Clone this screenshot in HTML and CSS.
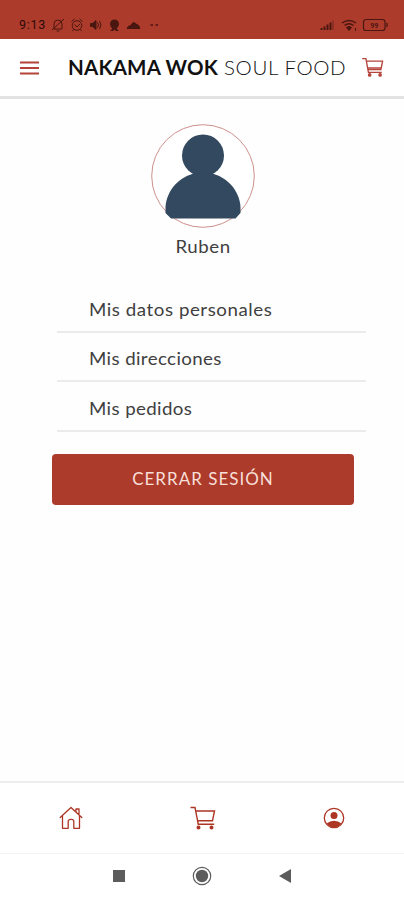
FILE: index.html
```html
<!DOCTYPE html>
<html lang="es">
<head>
<meta charset="utf-8">
<title>Nakama Wok Soul Food</title>
<link rel="stylesheet" href="styles.css">
</head>
<body>
<div class="status">
  <span class="time">9:13</span>
  <svg class="status-left" width="108" height="16" viewBox="0 0 108 16" fill="none" stroke="currentColor">
    <path d="M3 12V7a4 4 0 0 1 8 0v5H3M5.500 14h3M1 13L13 2"/>
    <circle cx="26" cy="8.500" r="4.800"/><path d="M23.500 7.500l2.500 2.500 3-3M20.500 4.500l3-2.500M31.500 4.500l-3-2.500M22.500 12.500l-1 1.500M29.500 12.500l1 1.500"/>
    <path d="M39.500 6.500h2l3.500-3v9l-3.500-3h-2z" fill="currentColor"/><path d="M46.500 5.500q2 2.500 0 5M48.500 4q3 4 0 8"/>
    <g fill="currentColor" stroke="none"><circle cx="63.500" cy="7" r="4.500"/><path d="M61 10h5v2l2 2h-3l-1.500-1.500L62 14h-3l2-2z"/></g>
    <path d="M76 11.500q1-3 4-3 2-5 5-1.500 3 .5 4 4.500z" fill="currentColor"/>
    <path d="M99.500 8h2.500M104.500 8h2.500" stroke-width="1.500"/>
  </svg>
  <svg class="status-right" width="68" height="16" viewBox="0 0 68 16" fill="none" stroke="currentColor">
    <path d="M1.500 11v2M4.500 9.500V13M7.500 7.500V13M10.500 5.500V13" stroke-width="2"/><path d="M13 3.500V13" opacity=".6"/>
    <path d="M22 6q7-5 14 0M24.500 8.500q4.500-3.500 9 0" stroke-width="1.500"/><path d="M26.500 10.500q2.500-2 5 0L29 13.500z" fill="currentColor"/><path d="M35.500 11v3"/>
    <rect x="43.500" y="2.500" width="21.500" height="11" rx="2.500" stroke-width="1.200"/><path d="M67 6v4" stroke-width="1.300"/>
    <text x="54.200" y="10.500" class="battery">99</text>
  </svg>
</div>
<header class="header">
  <svg class="menu" width="20" height="14" viewBox="0 0 20 14"><path d="M0 1.500h19M0 7h19M0 12.500h19" stroke="currentColor" stroke-width="1.800"/></svg>
  <h1 class="brand"><b>NAKAMA WOK</b><span>SOUL FOOD</span></h1>
  <svg class="header-cart" width="22" height="20" viewBox="0 0 26 24" fill="none" stroke="currentColor" stroke-width="1.600"><path d="M0 2h4.500l3 16.500h16M5.200 5h19.300l-2 10H7M7 13h15.500"/><circle cx="9" cy="21.500" r="1.400" fill="currentColor"/><circle cx="21.500" cy="21.500" r="1.400" fill="currentColor"/></svg>
</header>
<main class="main">
  <svg class="avatar" width="104" height="104" viewBox="0 0 104 104"><circle cx="52" cy="52" r="51.300" fill="#fff" stroke="#c78380" stroke-width=".9"/><g fill="#32495f"><circle cx="52" cy="31.500" r="21"/><path d="M14.500 89V83C15.500 66 29 52 44 49.500h16C75 52 88.500 66 89.500 83v6l-5 5.500H20z"/></g></svg>
  <p class="name"><span class="wide">Ruben</span></p>
  <nav class="list">
    <a class="row"><span class="wide">Mis datos personales</span></a>
    <a class="row"><span class="wide snug">Mis direcciones</span></a>
    <a class="row"><span class="wide snug">Mis pedidos</span></a>
  </nav>
  <button class="logout">CERRAR SESIÓN</button>
</main>
<nav class="tabs">
  <svg width="24" height="24" viewBox="0 0 24 24" fill="none" stroke="currentColor" stroke-width="1.300" stroke-linejoin="round" stroke-linecap="round"><path d="M1.200 11.500L12 1.500l10.800 10M17 6V3h3v6M3.500 10v12.300h5.700v-7q0-2 2.800-2t2.800 2v7h5.700V10"/></svg>
  <svg width="26" height="24" viewBox="0 0 26 24" fill="none" stroke="currentColor" stroke-width="1.400"><path d="M.5 1.500H5l2.600 13.300h14.900l2-9.800H5.800M7.500 14.500l.7 3.700h16"/><circle cx="8.500" cy="21.500" r="1.300" fill="currentColor"/><circle cx="21.500" cy="21.500" r="1.300" fill="currentColor"/></svg>
  <svg width="22" height="22" viewBox="0 0 22 22"><circle cx="11" cy="11" r="9.700" fill="none" stroke="currentColor" stroke-width="1.300"/><circle cx="11" cy="8.500" r="3.500" fill="currentColor"/><path d="M3.500 16.500q3.500-2.800 7.500-2.800t7.500 2.800Q15.500 20.500 11 20.500t-7.500-4z" fill="currentColor"/></svg>
</nav>
<div class="system">
  <svg width="12" height="12" viewBox="0 0 12 12"><path d="M0 0h12v12H0z" fill="currentColor"/></svg>
  <svg width="20" height="20" viewBox="0 0 20 20"><circle cx="10" cy="10" r="8.700" fill="none" stroke="currentColor" stroke-width="1.200"/><circle cx="10" cy="10" r="6.200" fill="currentColor"/></svg>
  <svg width="12" height="14" viewBox="0 0 12 14"><path d="M0 7L12 0v14z" fill="currentColor"/></svg>
</div>
</body>
</html>
```
FILE: styles.css
```css
* { box-sizing: border-box; }
body {
  margin: 0;
  width: 404px;
  height: 900px;
  display: flex;
  flex-direction: column;
  background: #fefefe;
  color: #404040;
  font-family: Lato, sans-serif;
  overflow: hidden;
}
svg { display: block; flex: none; }
.status {
  height: 39px;
  padding: 10px 16px 0 19px;
  display: flex;
  align-items: center;
  background: #ac3b2b;
  color: #4a1610;
}
.time { width: 32px; font: 400 12.5px Roboto, sans-serif; letter-spacing: .7px; color: #2c0b08; }
.status-right { margin-left: auto; }
.battery { font: 700 7px Roboto, sans-serif; fill: currentColor; stroke: none; text-anchor: middle; }
.header {
  height: 60px;
  padding: 0 20px 2px 20px;
  display: flex;
  align-items: center;
  background: #fff;
  border-bottom: 3px solid #e2e2e2;
  color: #b5433a;
}
.menu { margin-top: 2px; }
.brand {
  margin: 0 0 0 28px;
  display: flex;
  gap: 6px;
  color: #111;
  font-size: 20.5px;
  line-height: 24px;
  font-weight: 300;
  white-space: nowrap;
}
.brand b { width: 150px; font-weight: 700; letter-spacing: .2px; }
.brand span { width: 122px; letter-spacing: .6px; }
.header-cart { margin-left: auto; }
.main { flex: 1; display: flex; flex-direction: column; align-items: center; padding-top: 25px; }
.avatar { margin-left: 2px; }
.name { margin: 8px 0 0 2px; font-size: 17px; line-height: 22px; }
.wide { display: inline-block; transform: scaleX(1.1); transform-origin: left; letter-spacing: .5px; }
.name .wide { transform-origin: center; }
.snug { letter-spacing: .35px; }
.list { width: 309px; margin: 25px 0 0 19px; }
.row {
  display: flex;
  align-items: flex-end;
  height: 49.5px;
  padding: 0 0 10px 32px;
  border-bottom: 2px solid #ebebeb;
  font-size: 17px;
  line-height: 22px;
}
.logout {
  width: 302px;
  height: 51px;
  margin: 22px 0 0 2px;
  padding: 0 0 2px;
  border: 0;
  border-radius: 4px;
  background: #ac3b2b;
  color: #f8dfd8;
  font: 400 17px Lato, sans-serif;
  letter-spacing: 1px;
}
.tabs {
  height: 72px;
  padding: 0 59px;
  display: flex;
  align-items: center;
  justify-content: space-between;
  border-top: 2px solid #eee;
  background: #fff;
  color: #ad3524;
}
.system {
  height: 47px;
  padding: 0 113px 2px;
  display: flex;
  align-items: center;
  justify-content: space-between;
  border-top: 1px solid #f4f4f4;
  background: #fff;
  color: #5c5c5c;
}
```
